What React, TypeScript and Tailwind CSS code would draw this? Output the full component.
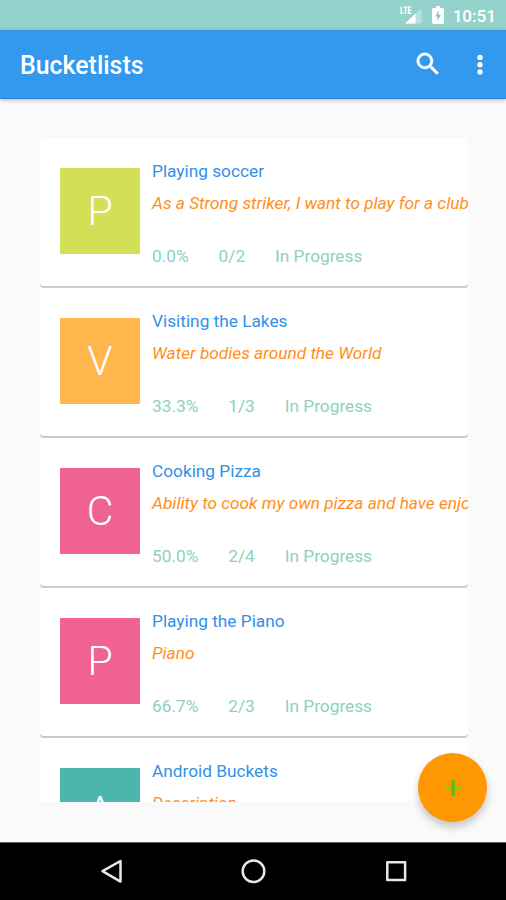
interface Bucketlist {
  name: string;
  description: string;
  percent: string;
  done: string;
  color: string;
}

const bucketlists: Bucketlist[] = [
  {
    name: "Playing soccer",
    description: "As a Strong striker, I want to play for a club",
    percent: "0.0%",
    done: "0/2",
    color: "bg-[#d3e057]",
  },
  {
    name: "Visiting the Lakes",
    description: "Water bodies around the World",
    percent: "33.3%",
    done: "1/3",
    color: "bg-[#ffb74d]",
  },
  {
    name: "Cooking Pizza",
    description: "Ability to cook my own pizza and have enjoyment",
    percent: "50.0%",
    done: "2/4",
    color: "bg-[#f06292]",
  },
  {
    name: "Playing the Piano",
    description: "Piano",
    percent: "66.7%",
    done: "2/3",
    color: "bg-[#f06292]",
  },
  {
    name: "Android Buckets",
    description: "Description",
    percent: "0.0%",
    done: "0/1",
    color: "bg-[#4db6ac]",
  },
];

const StatusBar = () => (
  <div className="flex h-[30px] shrink-0 items-center justify-end bg-[#93d3cb] pr-[10px] text-white">
    <svg width="22" height="20" viewBox="0 0 22 20" className="mr-[10px]">
      <path d="M21.5 3v15.5H5z" fill="#fff" fillOpacity="0.35" />
      <path d="M15.5 8.6v9.9H5z" fill="#fff" />
      <path
        d="M1.2 1.5v6.9h2.4M3.8 2.1h3.4M5.5 2.1v6.8M11.4 2.1H8.5v6.2h2.9M8.5 5.2h2.6"
        stroke="#fff"
        strokeWidth="1.4"
        fill="none"
      />
    </svg>
    <svg width="12" height="18" viewBox="0 0 12 18" className="mr-[9px]">
      <path d="M4 0h4v2h2.6Q12 2 12 3.4v13.2q0 1.4-1.4 1.4H1.4Q0 18 0 16.6V3.4Q0 2 1.4 2H4z" fill="#fff" />
      <path d="M6.7 4.8 3.2 10.6h2.3v4.2L8.9 9H6.7z" fill="#84c6be" />
    </svg>
    <span className="translate-y-px text-[17.1px] leading-5 font-medium">10:51</span>
  </div>
);

const Toolbar = () => (
  <header className="relative z-10 flex h-[69px] shrink-0 items-center border-t border-b border-t-[#3292dc] border-b-[#2789d8] bg-[#3399ee] pr-[22px] pl-5 text-white shadow-[0_1px_4px_rgba(0,0,0,0.3)]">
    <h1 className="flex-1 translate-y-px text-[24.9px] leading-8 font-medium">Bucketlists</h1>
    <svg
      width="30"
      height="30"
      viewBox="0 0 24 24"
      fill="#fff"
      stroke="#fff"
      strokeWidth="0.4"
      className="mr-[33px] -translate-y-px"
    >
      <path d="M15.5 14h-.79l-.28-.27A6.471 6.471 0 0 0 16 9.5 6.5 6.5 0 1 0 9.5 16c1.61 0 3.09-.59 4.23-1.57l.27.28v.79l5 4.99L20.49 19l-4.99-5zm-6 0C7.01 14 5 11.99 5 9.5S7.01 5 9.5 5 14 7.01 14 9.5 11.99 14 9.5 14z" />
    </svg>
    <svg width="8" height="22" viewBox="0 0 8 22" fill="#fff">
      <circle cx="4" cy="3.4" r="2.7" />
      <circle cx="4" cy="10.7" r="2.7" />
      <circle cx="4" cy="18" r="2.7" />
    </svg>
  </header>
);

const BucketCard = ({ item }: { item: Bucketlist }) => (
  <li className="flex h-[148px] shrink-0 overflow-hidden rounded-[4px] bg-white pl-5 shadow-[0_2px_1px_rgba(0,0,0,0.2)]">
    <div
      className={`mt-[30px] flex h-[86px] w-20 shrink-0 items-center justify-center rounded-[1px] pt-0.5 text-[41px] font-light text-white ${item.color}`}
    >
      {item.name[0]}
    </div>
    <div className="ml-3 pt-[22.5px] text-[17.25px] leading-5 whitespace-nowrap">
      <h2 className="text-[#3390e8]">{item.name}</h2>
      <p className="mt-3 text-[#ff8f1c] italic">{item.description}</p>
      <div className="mt-[33.5px] flex gap-[30px] text-[#8ed1bf]">
        <span>{item.percent}</span>
        <span>{item.done}</span>
        <span>In Progress</span>
      </div>
    </div>
  </li>
);

const NavigationBar = () => (
  <nav className="flex h-[58px] shrink-0 items-center justify-center border-t border-[#666] bg-black pb-0.5">
    <svg width="310" height="28" viewBox="0 0 310 28" fill="none" stroke="#e8e8e8" strokeWidth="2.5" strokeLinejoin="round">
      <path d="M22.5 4v20.6L4.5 14.2z" />
      <circle cx="155.5" cy="14.2" r="10.8" />
      <rect x="289.3" y="5.2" width="17.8" height="17.8" />
    </svg>
  </nav>
);

const App = () => {
  return (
    <div className="relative flex h-[900px] w-[506px] flex-col overflow-hidden bg-[#fafafa] font-['Roboto',sans-serif]">
      <StatusBar />
      <Toolbar />
      <main className="min-h-0 flex-1 px-10 pt-[39px] pb-10">
        <ul className="flex h-[664px] w-[428px] flex-col gap-[2px] overflow-hidden">
          {bucketlists.map((item) => (
            <BucketCard key={item.name} item={item} />
          ))}
        </ul>
      </main>
      <NavigationBar />

      {/* Floating action button */}
      <button className="absolute top-[753px] left-[418px] flex size-[69px] items-center justify-center rounded-full bg-[#ff9800] shadow-[0_5px_8px_rgba(0,0,0,0.22)]">
        <svg width="18" height="18" viewBox="0 0 18 18">
          <path d="M1 9h16" stroke="#8fc610" strokeWidth="3" />
          <path d="M9 1v16" stroke="#62b91c" strokeWidth="3.6" />
        </svg>
      </button>
    </div>
  );
};

export default App;
